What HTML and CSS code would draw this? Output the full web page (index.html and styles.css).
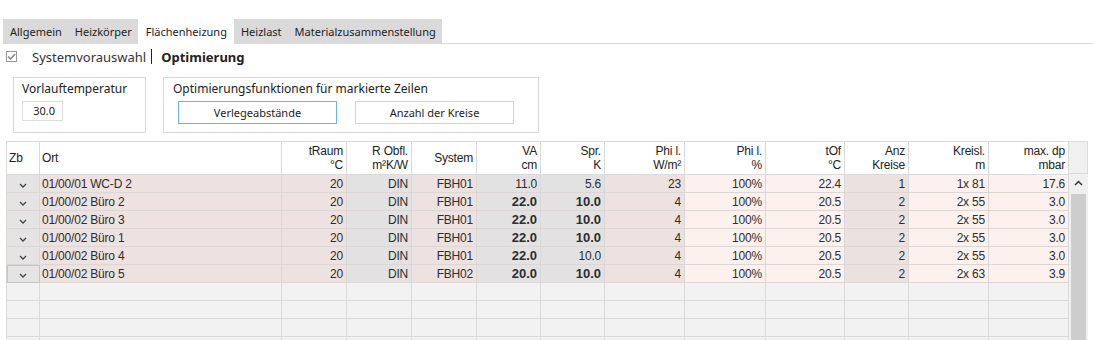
FILE: index.html
```html
<!DOCTYPE html>
<html lang="de">
<head>
  <meta charset="UTF-8" />
  <title>Flächenheizung</title>
  <link rel="stylesheet" href="styles.css">
</head>
<body>

<!-- Tabs -->
<div class="tabbar">
  <div class="tabs">
    <div class="tab">Allgemein</div>
    <div class="tab">Heizkörper</div>
    <div class="tab active">Flächenheizung</div>
    <div class="tab">Heizlast</div>
    <div class="tab">Materialzusammenstellung</div>
  </div>
  <div class="tabline"></div>
</div>

<!-- Breadcrumb -->
<div class="crumb">
  <span class="check">
    <svg width="9" height="7" viewBox="0 0 9 7"><path d="M1 3.5 L3.5 6 L8 1" fill="none" stroke="#8a8a8a" stroke-width="1.6"/></svg>
  </span>
  <span class="crumb-text">Systemvorauswahl</span>
  <span class="sep"></span>
  <b class="crumb-bold">Optimierung</b>
</div>

<!-- Group boxes -->
<div class="groups">
  <div class="group g1">
    <div class="group-title">Vorlauftemperatur</div>
    <div class="field">30.0</div>
  </div>
  <div class="group g2">
    <div class="group-title">Optimierungsfunktionen für markierte Zeilen</div>
    <div class="buttons">
      <button class="btn focus">Verlegeabstände</button>
      <button class="btn">Anzahl der Kreise</button>
    </div>
  </div>
</div>

<!-- Grid -->
<div class="grid">
  <table class="tbl">
    <colgroup>
      <col style="width:33px"><col style="width:242px"><col style="width:65px"><col style="width:65px">
      <col style="width:65px"><col style="width:64px"><col style="width:64px"><col style="width:80px">
      <col style="width:81px"><col style="width:79px"><col style="width:64px"><col style="width:80px">
      <col style="width:80px">
    </colgroup>
    <thead>
      <tr>
        <th class="left">Zb</th>
        <th class="left">Ort</th>
        <th>tRaum<br>°C</th>
        <th>R Obfl.<br>m²K/W</th>
        <th>System</th>
        <th>VA<br>cm</th>
        <th>Spr.<br>K</th>
        <th>Phi l.<br>W/m²</th>
        <th>Phi l.<br>%</th>
        <th>tOf<br>°C</th>
        <th>Anz<br>Kreise</th>
        <th>Kreisl.<br>m</th>
        <th>max. dp<br>mbar</th>
      </tr>
    </thead>
    <tbody id="rows"></tbody>
  </table>
  <div class="scroll">
    <div class="scroll-head"></div>
    <div class="scroll-up">
      <svg width="9" height="6" viewBox="0 0 9 6"><path d="M1 5 L4.5 1.5 L8 5" fill="none" stroke="#333" stroke-width="1.5"/></svg>
    </div>
    <div class="thumb"></div>
  </div>
</div>

<script>
  const data = [
    ["01/00/01 WC-D 2", "20", "DIN", "FBH01", "11.0", "5.6", "23", "100%", "22.4", "1", "1x 81", "17.6", "", ""],
    ["01/00/02 Büro 2", "20", "DIN", "FBH01", "22.0", "10.0", "4", "100%", "20.5", "2", "2x 55", "3.0", "b", "b"],
    ["01/00/02 Büro 3", "20", "DIN", "FBH01", "22.0", "10.0", "4", "100%", "20.5", "2", "2x 55", "3.0", "b", "b"],
    ["01/00/02 Büro 1", "20", "DIN", "FBH01", "22.0", "10.0", "4", "100%", "20.5", "2", "2x 55", "3.0", "b", "b"],
    ["01/00/02 Büro 4", "20", "DIN", "FBH01", "22.0", "10.0", "4", "100%", "20.5", "2", "2x 55", "3.0", "b", ""],
    ["01/00/02 Büro 5", "20", "DIN", "FBH02", "20.0", "10.0", "4", "100%", "20.5", "2", "2x 63", "3.9", "b", "b"]
  ];
  // colour class per column (after Zb)
  const tone = ["pk", "pk", "gy", "pk", "gy", "gy", "pk", "lp", "lp", "pk2", "lp", "lp"];
  const chev = '<svg width="8" height="5" viewBox="0 0 8 5"><path d="M1 1 L4 4 L7 1" fill="none" stroke="#444" stroke-width="1.3"/></svg>';

  let html = "";
  data.forEach((r, i) => {
    html += '<tr><td class="zb' + (i === 5 ? ' sel' : '') + '">' + chev + '</td>';
    for (let c = 0; c < 12; c++) {
      let cls = tone[c];
      if (c === 0) cls += " left";
      if ((c === 4 && r[12]) || (c === 5 && r[13])) cls += " bold";
      html += '<td class="' + cls + '">' + r[c] + '</td>';
    }
    html += "</tr>";
  });
  for (let i = 0; i < 4; i++) {
    html += '<tr class="empty">' + "<td></td>".repeat(13) + "</tr>";
  }
  document.getElementById("rows").innerHTML = html;
</script>

</body>
</html>
```

FILE: styles.css
```css
body {
  margin: 0;
  background: #fff;
  font-family: "Noto Sans", "Open Sans", sans-serif;
  font-size: 12px;
  color: #222;
  overflow: hidden;
}

/* tabs */
.tabbar {
  display: flex;
  align-items: flex-end;
  padding: 19px 0 0 3px;
}

.tabs {
  display: flex;
  background: #dadada;
  height: 25px;
}

.tab {
  padding: 0 6px 0 7px;
  line-height: 25px;
  font-size: 11px;
  color: #222;
}

.tab.active {
  background: #fff;
  padding: 0 7px 0 8px;
}

.tabline {
  flex: 1;
  border-bottom: 1px solid #dcdcdc;
}

/* breadcrumb */
.crumb {
  display: flex;
  align-items: center;
  height: 25px;
  padding-left: 6px;
  font-size: 13px;
}

.check {
  width: 11px;
  height: 11px;
  border: 1px solid #999;
  box-sizing: border-box;
  display: flex;
  align-items: center;
  justify-content: center;
  margin-right: 15px;
}

.crumb-text {
  color: #333;
}

.sep {
  width: 1px;
  height: 15px;
  background: #222;
  margin: 0 9px 0 5px;
}

.crumb-bold {
  font-weight: bold;
  color: #222;
}

/* group boxes */
.groups {
  display: flex;
  gap: 17px;
  padding: 8px 0 0 13px;
}

.group {
  border: 1px solid #d9d9d9;
  height: 56px;
  box-sizing: border-box;
  padding: 2px 8px 0;
}

.g1 { width: 133px; }
.g2 { width: 376px; padding-left: 9px; }

.group-title {
  font-size: 12px;
  line-height: 18px;
  color: #222;
}

.field {
  margin-top: 3px;
  width: 41px;
  height: 20px;
  border: 1px solid #dcdcdc;
  box-sizing: border-box;
  text-align: right;
  padding-right: 7px;
  line-height: 18px;
  font-size: 11px;
}

.buttons {
  display: flex;
  gap: 18px;
  margin-top: 3px;
  padding-left: 5px;
}

.btn {
  width: 159px;
  height: 23px;
  background: #fff;
  border: 1px solid #d4d4d4;
  font-family: "Noto Sans", "Open Sans", sans-serif;
  font-size: 11px;
  color: #222;
  padding: 0;
}

.btn.focus {
  border-color: #67b6e0;
}

/* grid */
.grid {
  display: flex;
  margin: 8px 0 0 6px;
}

.tbl {
  border-collapse: collapse;
  table-layout: fixed;
  width: 1062px;
  font-family: "Liberation Sans", Arial, sans-serif;
  font-size: 12px;
  letter-spacing: -0.2px;
  color: #2d2d2d;
}

.tbl th {
  height: 32px;
  padding: 0 3px 0 2px;
  font-weight: normal;
  text-align: right;
  line-height: 14px;
  color: #222;
  background: #fff;
  border: 1px solid #dadada;
}

.tbl th.left {
  text-align: left;
}

.tbl td {
  height: 17px;
  padding: 0 3px 0 2px;
  text-align: right;
  border: 1px solid #dcd6d5;
  white-space: nowrap;
}

.tbl td.left {
  text-align: left;
}

.tbl td.bold {
  font-weight: bold;
  font-size: 13px;
  letter-spacing: 0;
}

.zb {
  background: #e4e4e4;
  text-align: center !important;
}

.zb.sel {
  outline: 1px solid #c4c4c4;
  outline-offset: -1px;
}

.pk  { background: #ede2e0; }
.pk2 { background: #ebe1df; }
.gy  { background: #e2e2e2; }
.lp  { background: #fdf1ee; }

.empty td {
  background: #f2f2f2;
  border-color: #dadada;
}

.scroll {
  width: 19px;
  background: #f0f0f0;
  display: flex;
  flex-direction: column;
  align-items: center;
}

.scroll-head {
  height: 33px;
  width: 19px;
  box-sizing: border-box;
  border: 1px solid #dadada;
  border-left: none;
  background: #f0f0f0;
}

.scroll-up {
  height: 18px;
  display: flex;
  align-items: center;
  justify-content: center;
}

.thumb {
  width: 15px;
  flex: 1;
  min-height: 150px;
  margin-top: 2px;
  background: #cdcdcd;
}
```
